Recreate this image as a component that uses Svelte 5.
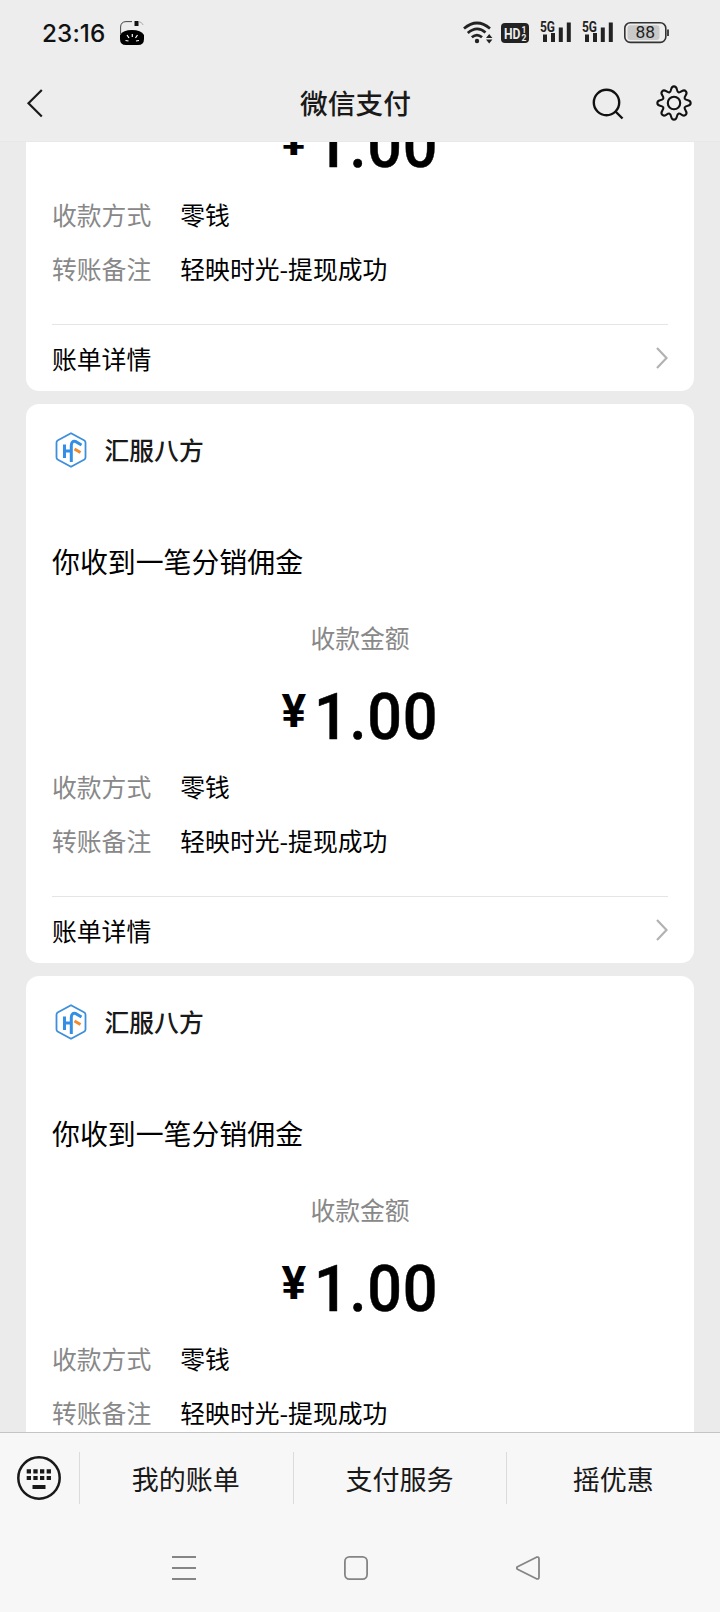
<script lang="ts">
  type Payment = {
    id: number;
    merchant: string;
    title: string;
    amount: string;
    method: string;
    note: string;
  };

  const base = {
    merchant: "汇服八方",
    title: "你收到一笔分销佣金",
    amount: "1.00",
    method: "零钱",
    note: "轻映时光-提现成功",
  };

  const payments: Payment[] = [1, 2, 3].map((id) => ({ id, ...base }));
  const menu = ["我的账单", "支付服务", "摇优惠"];

  // Eight-tooth cog outline around (18, 18), corners rounded through midpoints
  function cog(): string {
    const pts: number[][] = [];
    for (let i = 0; i < 8; i++) {
      for (const [r, d] of [[11.6, -17], [16.8, -7.5], [16.8, 7.5], [11.6, 17]]) {
        const a = ((i * 45 + d) * Math.PI) / 180;
        pts.push([18 + r * Math.sin(a), 18 - r * Math.cos(a)]);
      }
    }
    const mid = (a: number[], b: number[]) =>
      `${((a[0] + b[0]) / 2).toFixed(2)} ${((a[1] + b[1]) / 2).toFixed(2)}`;
    let d = `M${mid(pts[pts.length - 1], pts[0])}`;
    pts.forEach((p, i) => {
      d += `Q${p[0].toFixed(2)} ${p[1].toFixed(2)} ${mid(p, pts[(i + 1) % pts.length])}`;
    });
    return d + "Z";
  }
</script>

{#snippet signal()}
  <svg class="signal" width="32" height="24" viewBox="0 0 32 24">
    <text x="0" y="10.500" textLength="15" lengthAdjust="spacingAndGlyphs">5G</text>
    <path d="M5 13.500v7.500M13 12v9M20.800 6.500v14.500M28.800 1.500v19.500" />
  </svg>
{/snippet}

<div class="screen">
  <header>
    <div class="status">
      <span class="time">23:16</span>
      <svg class="app-badge" width="24" height="24" viewBox="0 0 24 24">
        <path d="M.6 13V6Q.8.8 6 .6H12" fill="none" stroke="#333" stroke-width=".9" />
        <path d="M14.500 0h4v5h-4z" fill="#111" />
        <path d="M18.500.6Q22 1 23.200 4" fill="none" stroke="#999" stroke-width=".8" />
        <path d="M0 14Q3 9 12 9T24 14V18Q24 24 18 24H6Q0 24 0 18Z" fill="#000" />
        <path d="M12.300 13v3M7 14l2 3M17.500 14l-2 3M5.500 19.500l3 .5M19 19.500l-3 .5" stroke="#fff" stroke-width="1.200" />
      </svg>
      <div class="indicators">
        <svg width="30" height="24" viewBox="0 0 30 24">
          <g fill="none" stroke="#222" stroke-width="2.700">
            <path d="M1 7.500Q14 -3.500 27 7.500" />
            <path d="M4.800 12Q14 4 22.500 11.500" />
            <path d="M8.800 16.300Q14 12 19 16.300" />
          </g>
          <circle cx="14" cy="20" r="2.200" fill="#222" />
          <path d="M23 17l3.200-4 3.200 4zM23 18.600l3.200 4 3.200-4z" fill="#222" />
        </svg>
        <svg class="hd" width="28" height="20" viewBox="0 0 28 20">
          <rect width="28" height="20" rx="4" fill="#222" />
          <text x="3" y="15.500" font-size="15.500" textLength="16.500" lengthAdjust="spacingAndGlyphs">HD</text>
          <text x="20.500" y="9.500" font-size="8.500">1</text>
          <text x="20.500" y="17.500" font-size="8.500">2</text>
        </svg>
        {@render signal()}
        {@render signal()}
        <svg class="battery" width="45" height="22" viewBox="0 0 45 22">
          <rect x=".8" y=".8" width="41" height="19.600" rx="5.500" fill="none" stroke="#333" stroke-width="1.600" />
          <rect x="3.500" y="3.200" width="32" height="14.800" rx="3" fill="#c9c9c9" />
          <path d="M44 7.500v6.500" stroke="#333" stroke-width="1.800" />
          <text x="11.500" y="16" textLength="19.500" lengthAdjust="spacingAndGlyphs">88</text>
        </svg>
      </div>
    </div>
    <nav class="titlebar">
      <svg width="20" height="32" viewBox="0 0 20 32">
        <path d="M15.800 3L2.500 16.200 15.800 29.500" fill="none" stroke="#1a1a1a" stroke-width="2.200" />
      </svg>
      <h1>微信支付</h1>
      <div class="tools">
        <svg width="36" height="36" viewBox="0 0 36 36">
          <g fill="none" stroke="#111" stroke-width="2.400">
            <circle cx="17.500" cy="17.500" r="12.700" />
            <path d="M26 26L33.500 33.500" />
          </g>
        </svg>
        <svg width="36" height="36" viewBox="0 0 36 36">
          <g fill="none" stroke="#111" stroke-width="2.100" stroke-linejoin="round">
            <path d={cog()} />
            <circle cx="18" cy="18" r="6.200" />
          </g>
        </svg>
      </div>
    </nav>
  </header>

  <main>
    {#each payments as p, i (p.id)}
      <!-- the list is scrolled, so the first card begins at its amount -->
      <article class="card" class:partial={i === 0}>
        {#if i > 0}
          <div class="merchant">
            <svg width="32" height="36" viewBox="0 0 32 36">
              <path
                d="M16 1.200L29 8.200Q30.500 9 30.500 10.500V25.500Q30.500 27 29 27.800L16 34.800 3 27.800Q1.500 27 1.500 25.500V10.500Q1.500 9 3 8.200Z"
                fill="none"
                stroke="#3d8fdb"
                stroke-width="1.800"
              />
              <path d="M9.500 12.500V26M9.500 19H16M16.300 30V13.500Q16.500 8.500 20.500 9.500L26.500 13" fill="none" stroke="#338fe5" stroke-width="3" />
              <path d="M19.500 17l6 3.500" stroke="#f08a2c" stroke-width="3" />
            </svg>
            <span>{p.merchant}</span>
          </div>
          <h2>{p.title}</h2>
          <p class="label">收款金额</p>
        {/if}
        <p class="amount"><span class="yen">¥</span><span class="digits">{p.amount}</span></p>
        <dl>
          <div><dt>收款方式</dt><dd>{p.method}</dd></div>
          <div><dt>转账备注</dt><dd>{p.note}</dd></div>
        </dl>
        <div class="detail">
          <span>账单详情</span>
          <svg width="12" height="22" viewBox="0 0 12 22">
            <path d="M1 1l9.500 10L1 21" fill="none" stroke="#b2b2b2" stroke-width="2.200" />
          </svg>
        </div>
      </article>
    {/each}
  </main>

  <footer>
    <div class="menu">
      <div class="keyboard">
        <svg width="44" height="44" viewBox="0 0 44 44">
          <circle cx="22" cy="22" r="20.700" fill="none" stroke="#191919" stroke-width="2.500" />
          <path d="M9.700 15.400h25M9.700 22h25" stroke="#191919" stroke-width="4.200" stroke-dasharray="4.300 2.350" />
          <path d="M15.500 31h13" stroke="#191919" stroke-width="4" />
        </svg>
      </div>
      {#each menu as item}
        <div class="item">{item}</div>
      {/each}
    </div>
    <div class="system">
      <svg width="24" height="26" viewBox="0 0 24 26">
        <path d="M0 2h24M0 13h24M0 24h24" />
      </svg>
      <svg width="24" height="26" viewBox="0 0 24 26">
        <rect x=".9" y="1.900" width="22.200" height="22.200" rx="4.500" />
      </svg>
      <svg width="24" height="26" viewBox="0 0 24 26">
        <path d="M1.500 11.700L20.500 2.200Q23 1.500 23 4V22Q23 24.500 20.500 23.800L1.500 14.300Q0 13 1.500 11.700Z" />
      </svg>
    </div>
  </footer>
</div>

<style>
  :global(body) {
    margin: 0;
  }

  .screen {
    width: 720px;
    height: 1612px;
    display: flex;
    flex-direction: column;
    overflow: hidden;
    background: #ebebeb;
    color: #000;
    font-family: "Noto Sans CJK SC", sans-serif;
  }

  h1,
  h2,
  p,
  dl,
  dd {
    margin: 0;
    font-weight: 400;
  }

  svg {
    display: block;
    flex: none;
  }

  header {
    flex: none;
    height: 142px;
    box-sizing: border-box;
    background: #ededed;
    border-bottom: 1px solid #e8e8e8;
  }

  .status {
    display: flex;
    align-items: center;
    height: 64px;
    box-sizing: border-box;
    padding: 1px 51px 0 42px;
  }

  .time {
    width: 78px;
    font: 500 24.3px/62px Inter, sans-serif;
    letter-spacing: 0.1px;
    color: #111;
  }

  .indicators {
    margin-left: auto;
    display: flex;
    align-items: center;
  }

  .hd {
    margin: 0 11px 0 8px;
  }

  .hd text {
    fill: #ededed;
    font-family: Roboto, sans-serif;
    font-weight: 700;
  }

  .signal {
    margin-right: 10px;
  }

  .signal text {
    font: 700 14px Roboto, sans-serif;
    fill: #222;
  }

  .signal path {
    stroke: #222;
    stroke-width: 4;
  }

  .battery text {
    font: 400 16px Roboto, sans-serif;
    fill: #222;
  }

  .titlebar {
    display: grid;
    grid-template-columns: 1fr auto 1fr;
    align-items: center;
    height: 78px;
    padding: 0 28px 0 26px;
  }

  h1 {
    padding: 0 7px 2px 0;
    font-size: 27.7px;
    line-height: 40px;
    font-weight: 500;
    color: #191919;
  }

  .tools {
    display: flex;
    justify-content: flex-end;
    gap: 31px;
  }

  main {
    flex: 1;
    min-height: 0;
    display: flex;
    flex-direction: column;
    gap: 13px;
    padding: 0 26px;
    overflow: hidden;
  }

  .card {
    flex: none;
    height: 559px;
    box-sizing: border-box;
    padding: 0 26px;
    display: flex;
    flex-direction: column;
    border-radius: 13px;
    background: #fff;
    font-size: 24.8px;
    line-height: 30px;
  }

  .merchant {
    display: flex;
    align-items: center;
    gap: 17.5px;
    height: 91px;
    padding-left: 3px;
    font-weight: 500;
    color: #191919;
  }

  .merchant span {
    padding-bottom: 2px;
  }

  h2 {
    margin-top: 46px;
    font-size: 27.9px;
    line-height: 40px;
  }

  .label {
    margin-top: 41px;
    text-align: center;
    color: #888;
  }

  .amount {
    display: flex;
    justify-content: center;
    height: 80px;
    margin-top: 26px;
    padding-left: 4px;
    font: 500 65px/78px Roboto, sans-serif;
  }

  .yen {
    margin-right: 4px;
    font-size: 46px;
    line-height: 66px;
    font-weight: 700;
  }

  .digits {
    letter-spacing: 0.8px;
    -webkit-text-stroke: 0.5px #000;
    transform: scaleX(0.94);
  }

  .partial {
    height: 285px;
    margin-top: -36px;
  }

  .partial .amount {
    margin-top: 0;
  }

  dl {
    display: flex;
    flex-direction: column;
    gap: 24px;
    margin-top: 13px;
  }

  dl div {
    display: flex;
  }

  dt {
    width: 128.3px;
    color: #888;
  }

  .detail {
    display: flex;
    align-items: center;
    justify-content: space-between;
    height: 66px;
    margin-top: auto;
    border-top: 1px solid #e5e5e5;
  }

  footer {
    flex: none;
    height: 180px;
    box-sizing: border-box;
    border-top: 1px solid #c4c4c4;
    background: #f7f7f7;
  }

  .menu {
    display: flex;
    align-items: center;
    height: 90px;
  }

  .keyboard {
    width: 79px;
    box-sizing: border-box;
    padding-left: 17px;
  }

  .item {
    flex: 1;
    height: 52px;
    padding-right: 1px;
    border-left: 1px solid #dcdcdc;
    font-size: 27px;
    line-height: 54px;
    text-align: center;
    color: #191919;
  }

  .system {
    display: flex;
    justify-content: center;
    gap: 148px;
    padding: 32px 8px 0 0;
  }

  .system svg {
    fill: none;
    stroke: #858585;
    stroke-width: 1.8;
    stroke-linejoin: round;
  }
</style>
